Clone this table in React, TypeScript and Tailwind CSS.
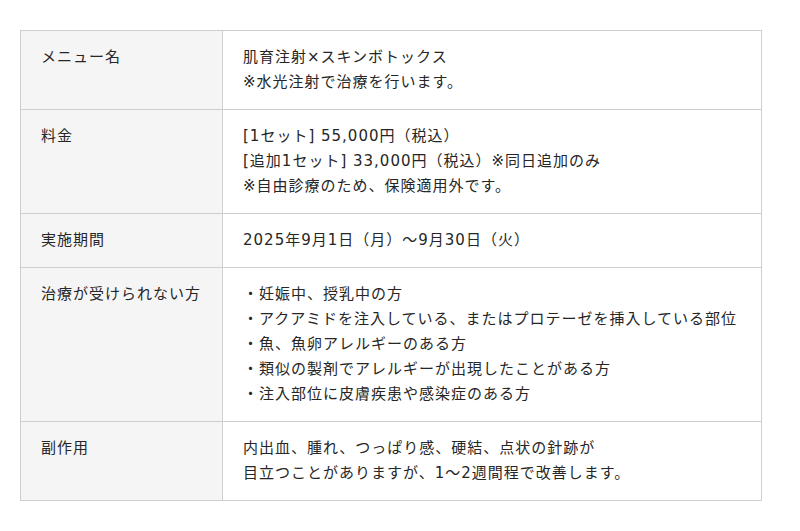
const rows: { label: string; lines: string[] }[] = [
  {
    label: "メニュー名",
    lines: ["肌育注射×スキンボトックス", "※水光注射で治療を行います。"],
  },
  {
    label: "料金",
    lines: [
      "[1セット] 55,000円（税込）",
      "[追加1セット] 33,000円（税込）※同日追加のみ",
      "※自由診療のため、保険適用外です。",
    ],
  },
  {
    label: "実施期間",
    lines: ["2025年9月1日（月）～9月30日（火）"],
  },
  {
    label: "治療が受けられない方",
    lines: [
      "・妊娠中、授乳中の方",
      "・アクアミドを注入している、またはプロテーゼを挿入している部位",
      "・魚、魚卵アレルギーのある方",
      "・類似の製剤でアレルギーが出現したことがある方",
      "・注入部位に皮膚疾患や感染症のある方",
    ],
  },
  {
    label: "副作用",
    lines: [
      "内出血、腫れ、つっぱり感、硬結、点状の針跡が",
      "目立つことがありますが、1～2週間程で改善します。",
    ],
  },
];

export default function App() {
  return (
    <div className="w-[800px] h-[531px] bg-white pt-[30px] pl-[20px] font-['DejaVu_Sans','Noto_Sans_CJK_JP',sans-serif] text-[15px] leading-[25px] text-[#262626] tracking-[1px]">
      <div className="w-[742px] border-t border-l border-[#cfcfcf]">
        {rows.map((row) => (
          <div key={row.label} className="flex border-b border-[#cfcfcf]">
            <div className="w-[202px] shrink-0 bg-[#f5f5f5] border-r border-[#cfcfcf] px-[20px] py-[14px]">
              {row.label}
            </div>
            <div className="flex-1 border-r border-[#cfcfcf] px-[20px] py-[14px]">
              {row.lines.map((line) => (
                <div key={line}>{line}</div>
              ))}
            </div>
          </div>
        ))}
      </div>
    </div>
  );
}
